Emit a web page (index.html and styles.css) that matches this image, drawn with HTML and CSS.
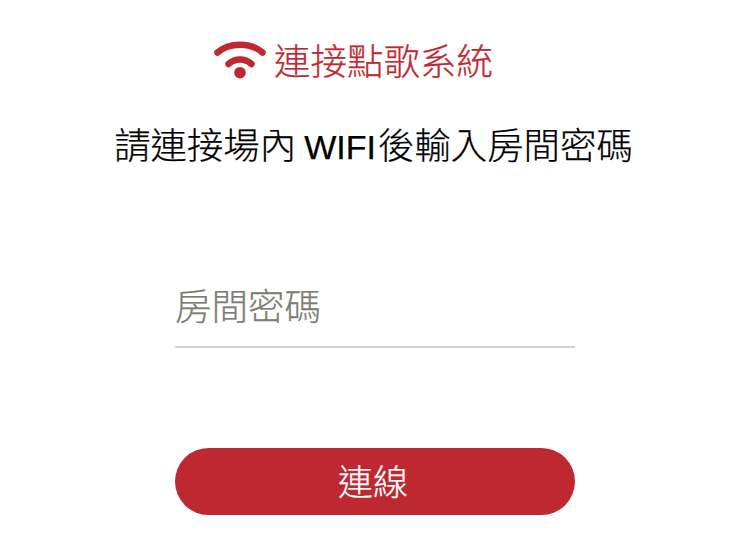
FILE: index.html
```html
<!DOCTYPE html>
<html lang="zh-Hant">
<head>
<meta charset="utf-8">
<title>連接點歌系統</title>
<link rel="stylesheet" href="styles.css">
</head>
<body>
<main class="page">
  <h1 class="brand">
    <svg class="brand-icon" viewBox="0 0 52 40" width="52" height="40" aria-hidden="true">
      <path d="M3.5 12.5 C15 2 37 2 48.5 12.5" fill="none" stroke="#be2931" stroke-width="6.5" stroke-linecap="round"/>
      <path d="M14.5 24 C21 18 31 18 37.5 24" fill="none" stroke="#be2931" stroke-width="6.5" stroke-linecap="round"/>
      <circle cx="26" cy="32.7" r="5.8" fill="#be2931"/>
    </svg>
    <span class="brand-name">連接點歌系統</span>
  </h1>
  <p class="hint">請連接場內 <span class="latin">WIFI</span>後輸入房間密碼</p>
  <div class="field">房間密碼</div>
  <button class="connect" type="button">連線</button>
</main>
</body>
</html>
```
FILE: styles.css
```css
html, body {
  margin: 0;
  padding: 0;
  background: #fff;
}
body {
  font-family: "Liberation Sans", "Noto Sans CJK TC", sans-serif;
}
.page {
  width: 750px;
  height: 541px;
  display: flex;
  flex-direction: column;
  align-items: center;
  overflow: hidden;
}
.brand {
  margin: 40px 43px 0 0;
  height: 40px;
  display: flex;
  align-items: center;
  gap: 8px;
  font-size: 36.5px;
  font-weight: 300;
  color: #be2931;
  -webkit-text-stroke: 0.25px currentColor;
}
.brand-icon {
  flex: none;
}
.brand-name {
  margin-bottom: 2px;
}
.hint {
  height: 44px;
  margin: 45px 3px 0 0;
  font-size: 36.4px;
  font-weight: 300;
  line-height: 44px;
  color: #000;
  white-space: nowrap;
  word-spacing: -2px;
  -webkit-text-stroke: 0.25px currentColor;
}
.latin {
  margin-right: 2px;
  font-size: 34px;
}
.field {
  box-sizing: border-box;
  width: 400px;
  height: 68px;
  margin-top: 111px;
  padding-top: 3px;
  font-size: 36.5px;
  font-weight: 300;
  line-height: 50px;
  color: #7d7d72;
  border-bottom: 2px solid #d2d2d2;
  -webkit-text-stroke: 0.25px currentColor;
}
.connect {
  width: 400px;
  height: 67px;
  margin-top: 100px;
  padding: 0 4px 5px 0;
  border: 0;
  border-radius: 34px;
  background: #be2931;
  color: #fff;
  font: inherit;
  font-size: 35px;
  font-weight: 300;
  -webkit-text-stroke: 0.25px currentColor;
}
```
